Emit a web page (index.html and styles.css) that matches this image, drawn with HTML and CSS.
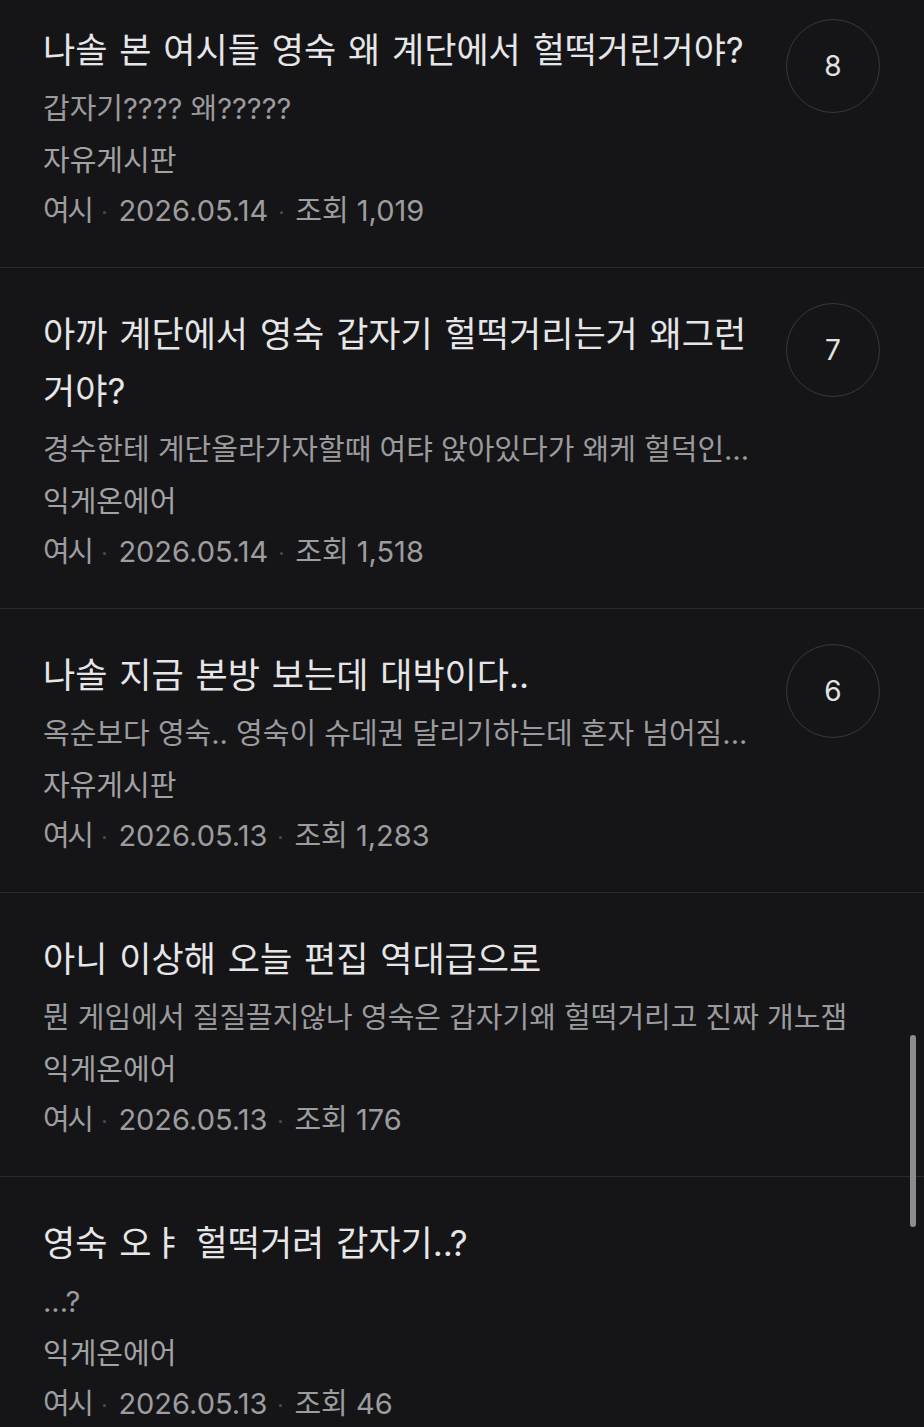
FILE: index.html
```html
<!DOCTYPE html>
<html lang="ko">
<head>
<meta charset="utf-8">
<title>게시글 목록</title>
<link rel="stylesheet" href="styles.css">
</head>
<body>
<main class="list">
  <article class="post">
    <div class="body">
      <h2 class="title">나솔 본 여시들 영숙 왜 계단에서 헐떡거린거야?</h2>
      <p class="excerpt">갑자기???? 왜?????</p>
      <p class="board">자유게시판</p>
      <p class="meta"><span class="author">여시</span><i class="dot"></i><span>2026.05.14</span><i class="dot"></i><span>조회 1,019</span></p>
    </div>
    <div class="count">8</div>
  </article>
  <article class="post">
    <div class="body">
      <h2 class="title">아까 계단에서 영숙 갑자기 헐떡거리는거 왜그런거야?</h2>
      <p class="excerpt">경수한테 계단올라가자할때 여탸 앉아있다가 왜케 헐덕인지 모르겠어 갑자기</p>
      <p class="board">익게온에어</p>
      <p class="meta"><span class="author">여시</span><i class="dot"></i><span>2026.05.14</span><i class="dot"></i><span>조회 1,518</span></p>
    </div>
    <div class="count">7</div>
  </article>
  <article class="post">
    <div class="body">
      <h2 class="title">나솔 지금 본방 보는데 대박이다..</h2>
      <p class="excerpt">옥순보다 영숙.. 영숙이 슈데권 달리기하는데 혼자 넘어짐...</p>
      <p class="board">자유게시판</p>
      <p class="meta"><span class="author">여시</span><i class="dot"></i><span>2026.05.13</span><i class="dot"></i><span>조회 1,283</span></p>
    </div>
    <div class="count">6</div>
  </article>
  <article class="post">
    <div class="body">
      <h2 class="title">아니 이상해 오늘 편집 역대급으로</h2>
      <p class="excerpt">뭔 게임에서 질질끌지않나 영숙은 갑자기왜 헐떡거리고 진짜 개노잼</p>
      <p class="board">익게온에어</p>
      <p class="meta"><span class="author">여시</span><i class="dot"></i><span>2026.05.13</span><i class="dot"></i><span>조회 176</span></p>
    </div>
  </article>
  <article class="post">
    <div class="body">
      <h2 class="title">영숙 오ㅑ 헐떡거려 갑자기..?</h2>
      <p class="excerpt">...?</p>
      <p class="board">익게온에어</p>
      <p class="meta"><span class="author">여시</span><i class="dot"></i><span>2026.05.13</span><i class="dot"></i><span>조회 46</span></p>
    </div>
  </article>
</main>
<div class="scroll-thumb"></div>
</body>
</html>
```

FILE: styles.css
```css
html, body {
  margin: 0;
  padding: 0;
  background: #151518;
}

body {
  font-family: "Inter", "Noto Sans CJK KR", sans-serif;
  color: #e4e4e6;
  overflow: hidden;
}

.list {
  margin-top: -16px;
}

.post {
  display: flex;
  align-items: flex-start;
  gap: 24px;
  padding: 38px 44px 31px 43px;
  border-bottom: 1px solid #2a2a2d;
}

.body {
  flex: 1;
  min-width: 0;
}

.title {
  margin: 0;
  font-size: 35px;
  font-weight: 400;
  line-height: 57px;
  word-spacing: 2px;
  color: #e6e6e8;
}

.excerpt {
  margin: 5px 0 0;
  font-size: 29px;
  line-height: 50px;
  color: #9b9b9e;
  white-space: nowrap;
  overflow: hidden;
  text-overflow: ellipsis;
}

.board {
  margin: 2px 0 0;
  font-size: 29px;
  line-height: 50px;
  color: #a2a2a4;
}

.meta {
  margin: 0;
  display: flex;
  align-items: center;
  font-size: 29px;
  line-height: 50px;
  color: #9d9d9f;
}

.author {
  letter-spacing: -2.5px;
}

.dot {
  width: 3px;
  height: 3px;
  border-radius: 50%;
  background: #4d4d50;
  margin: 2px 12px 0;
}

.count {
  flex: none;
  width: 92px;
  height: 92px;
  margin-top: -3px;
  border: 1px solid #38383b;
  border-radius: 50%;
  display: flex;
  align-items: center;
  justify-content: center;
  font-size: 28px;
  color: #e2e2e4;
}

.scroll-thumb {
  position: fixed;
  top: 1035px;
  left: 910px;
  width: 6px;
  height: 192px;
  border-radius: 3px;
  background: #8c8c8f;
}
```
